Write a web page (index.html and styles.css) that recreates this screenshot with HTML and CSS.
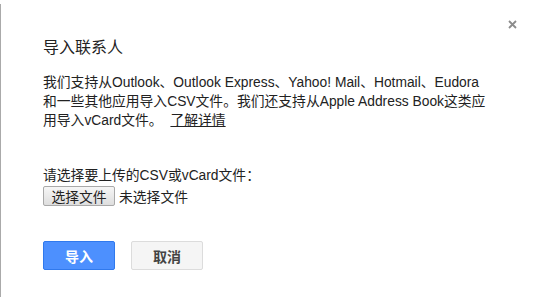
FILE: index.html
```html
<!DOCTYPE html>
<html lang="zh-CN">
<head>
<meta charset="utf-8">
<title>导入联系人</title>
<link rel="stylesheet" href="styles.css">
</head>
<body>
<div class="dialog">
  <button class="close" aria-label="关闭">
    <svg width="9" height="9" viewBox="0 0 9 9"><path d="M1 1L8 8M8 1L1 8" stroke="#8c8c8c" stroke-width="1.8" fill="none"/></svg>
  </button>
  <h1 class="title">导入联系人</h1>
  <p class="desc">我们支持从Outlook、Outlook Express、Yahoo! Mail、Hotmail、Eudora和一些其他应用导入CSV文件。我们还支持从Apple Address Book这类应用导入vCard文件。 <a class="link" href="#">了解详情</a></p>
  <div class="upload">
    <div class="label">请选择要上传的CSV或vCard文件：</div>
    <div class="file-row"><span class="file-btn">选择文件</span><span class="file-name">未选择文件</span></div>
  </div>
  <div class="actions">
    <button class="btn primary">导入</button>
    <button class="btn">取消</button>
  </div>
</div>
</body>
</html>
```
FILE: styles.css
```css
html, body {
  margin: 0;
  padding: 0;
  background: #fff;
}
body {
  font-family: "Liberation Sans", Arial, "Noto Sans CJK SC", sans-serif;
  color: #222;
  font-size: 13px;
}
.dialog {
  position: relative;
  margin-top: 4px;
  height: 293px;
  border-left: 1px solid #aaa;
  box-sizing: border-box;
  padding: 32px 0 0 42px;
  width: 533px;
}
.close {
  position: absolute;
  top: 16px;
  right: 16px;
  width: 9px;
  height: 9px;
  padding: 0;
  border: 0;
  background: none;
  display: flex;
}
.title {
  margin: 0;
  font-size: 16px;
  font-weight: normal;
  line-height: 24px;
}
.desc {
  margin: 13px 0 0;
  width: 446px;
  line-height: 19px;
  font-size: 13.8px;
}
.link {
  color: #222;
  text-decoration: underline;
  margin-left: 4px;
}
.upload {
  margin-top: 36px;
}
.label {
  line-height: 19px;
  font-size: 13.8px;
}
.file-row {
  display: flex;
  align-items: center;
  margin-top: 1px;
  font-size: 13.8px;
}
.file-btn {
  box-sizing: border-box;
  width: 72px;
  height: 20px;
  border: 1px solid #a9a9a9;
  border-radius: 2px;
  background: linear-gradient(#f6f6f6, #dedede);
  display: flex;
  align-items: center;
  justify-content: center;
}
.file-name {
  margin-left: 4px;
}
.actions {
  display: flex;
  gap: 16px;
  margin-top: 35px;
}
.btn {
  box-sizing: border-box;
  width: 72px;
  height: 29px;
  border: 1px solid #dcdcdc;
  border-radius: 2px;
  background: #f5f5f5;
  color: #444;
  font-family: inherit;
  font-size: 14px;
  font-weight: bold;
  padding: 0;
}
.btn.primary {
  background: #4d90fe;
  border-color: #3079ed;
  color: #fff;
}
```
